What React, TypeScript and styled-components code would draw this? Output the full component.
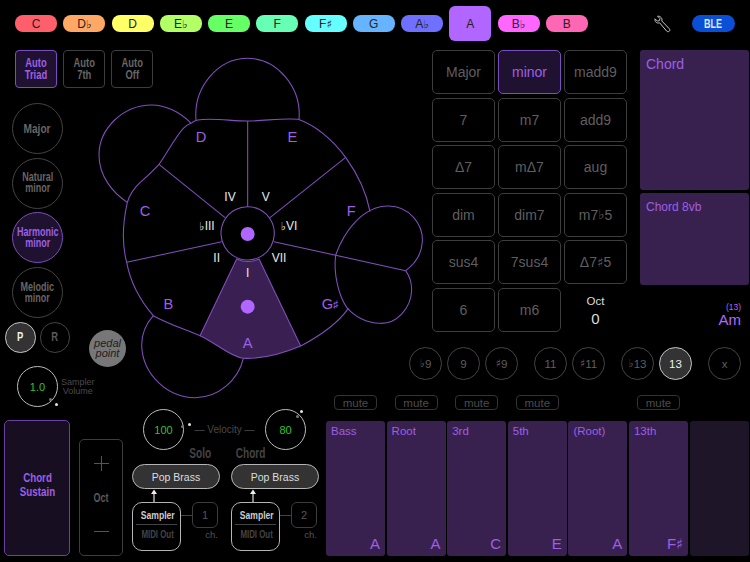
import React from 'react';
import styled, { createGlobalStyle } from 'styled-components';

const GlobalStyle = createGlobalStyle`
  html, body {
    margin: 0;
    background: #000;
    font-family: "Liberation Sans", Arial, "DejaVu Sans", sans-serif;
  }
`;

const PURPLE = '#9d5fe6';
const LINE = '#3d3d3d';

const Page = styled.div`
  width: 750px;
  height: 562px;
  background: #000;
  overflow: hidden;
`;

// the app's bold labels are a condensed face, no such font here
const Squeeze = styled.span<{ $x?: number }>`
  display: inline-block;
  transform: scaleX(${(p) => p.$x ?? 0.75});
  white-space: nowrap;
`;

const TopBar = styled.div`
  height: 47px;
  display: flex;
  align-items: center;
  padding-left: 15px;
`;

const Keys = styled.div`
  display: flex;
  align-items: center;
  gap: 6.25px;
`;

const Key = styled.div<{ $color: string; $active?: boolean }>`
  width: 42px;
  height: ${(p) => (p.$active ? 35 : 17.5)}px;
  border-radius: ${(p) => (p.$active ? 6 : 8)}px;
  background: ${(p) => p.$color};
  color: #222;
  font-size: 12px;
  display: flex;
  align-items: center;
  justify-content: center;
`;

const Acc = styled.span`
  font-size: 0.95em;
  font-family: "DejaVu Sans", sans-serif;
`;

const WrenchIcon = styled.svg`
  width: 17px;
  height: 18px;
  margin-left: 66px;
  color: #c8c8c8;
`;

const Ble = styled.div`
  margin-left: 21px;
  width: 43px;
  height: 17.5px;
  border-radius: 9px;
  background: #0b4fd6;
  color: #dfe8ff;
  font-size: 12px;
  font-weight: bold;
  display: flex;
  align-items: center;
  justify-content: center;
`;

const Body = styled.div`
  display: flex;
`;

const LeftSide = styled.div`
  width: 326px;
  flex-shrink: 0;
`;

const UpperLeft = styled.div`
  height: 362px;
  display: flex;
`;

const Rail = styled.div`
  width: 153px;
  flex-shrink: 0;
  padding-top: 3px;
`;

const AutoRow = styled.div`
  display: flex;
  gap: 6px;
  margin-left: 15px;
`;

const AutoButton = styled.div<{ $active?: boolean }>`
  width: 42px;
  height: 38px;
  box-sizing: border-box;
  border: 1px solid ${(p) => (p.$active ? '#7d4cc0' : LINE)};
  border-radius: 4px;
  background: ${(p) => (p.$active ? '#1f1230' : 'transparent')};
  color: ${(p) => (p.$active ? PURPLE : '#666')};
  font-size: 12.5px;
  font-weight: bold;
  line-height: 12px;
  text-align: center;
  display: flex;
  align-items: center;
  justify-content: center;
`;

const Modes = styled.div`
  margin: 15px 0 0 12px;
  display: flex;
  flex-direction: column;
  gap: 3.7px;
`;

const ModeCircle = styled.div<{ $active?: boolean; $big?: boolean }>`
  width: 51px;
  height: 51px;
  box-sizing: border-box;
  border-radius: 50%;
  border: 1px solid ${(p) => (p.$active ? '#7d4cc0' : '#444')};
  background: ${(p) => (p.$active ? '#1f1230' : 'transparent')};
  color: ${(p) => (p.$active ? PURPLE : '#666')};
  font-size: ${(p) => (p.$big ? 13.5 : 12)}px;
  font-weight: bold;
  line-height: 11px;
  text-align: center;
  display: flex;
  align-items: center;
  justify-content: center;
  white-space: nowrap;
`;

const PedalRow = styled.div`
  height: 44px;
  margin-top: 4px;
  padding-left: 5px;
  display: flex;
  align-items: flex-start;
  gap: 4px;
`;

const SmallToggle = styled.div<{ $on?: boolean }>`
  width: 30.5px;
  height: 30.5px;
  box-sizing: border-box;
  border-radius: 50%;
  border: 1px solid ${(p) => (p.$on ? '#c4c4c4' : '#444')};
  background: ${(p) => (p.$on ? '#333' : 'transparent')};
  color: ${(p) => (p.$on ? '#eee' : '#5c5c5c')};
  font-size: 12.5px;
  font-weight: bold;
  display: flex;
  align-items: center;
  justify-content: center;
`;

const PedalPoint = styled.div`
  width: 37px;
  height: 37px;
  margin: 8px 0 0 15px;
  border-radius: 50%;
  background: #777;
  color: #1d1d1d;
  font-size: 11px;
  font-style: italic;
  line-height: 9.5px;
  text-align: center;
  display: flex;
  align-items: center;
  justify-content: center;
`;

const VolumeRow = styled.div`
  margin-left: 17px;
  display: flex;
  align-items: center;
  gap: 3px;
`;

const Knob = styled.div`
  position: relative;
  width: 41px;
  height: 41px;
  flex-shrink: 0;
  box-sizing: border-box;
  border-radius: 50%;
  border: 1px solid #bdbdbd;
  color: #2fc42f;
  font-size: 11px;
  display: flex;
  align-items: center;
  justify-content: center;
`;

const KnobDot = styled.i<{ $x: number; $y: number; $dim?: boolean }>`
  position: absolute;
  left: ${(p) => p.$x}px;
  top: ${(p) => p.$y}px;
  width: 3px;
  height: 3px;
  border-radius: 50%;
  background: ${(p) => (p.$dim ? '#777' : '#e4e4e4')};
`;

const VolumeLabel = styled.div`
  color: #4a4a4a;
  font-size: 9px;
  line-height: 8.5px;
  text-align: center;
`;

const WheelArea = styled.div`
  margin: 3px 0 0 -58px;
  width: 231px;
`;

const WheelSvg = styled.svg`
  display: block;
  width: 330px;
  height: 350px;
  overflow: visible;
`;

const Outline = styled.path`
  fill: none;
  stroke: #7f4fbc;
  stroke-width: 3.2;
`;

const Wedge = styled.path`
  fill: #3a2052;
  stroke: #7f4fbc;
  stroke-width: 3.2;
`;

const NoteText = styled.text`
  fill: ${PURPLE};
  font-size: 44px;
  text-anchor: middle;
  dominant-baseline: central;
`;

const DegreeText = styled.text`
  fill: #e8e8e8;
  font-size: 36px;
  text-anchor: middle;
  dominant-baseline: central;
`;

const Dot = styled.circle`
  fill: #b066ff;
`;

const LowerLeft = styled.div`
  height: 153px;
  display: flex;
`;

const Sustain = styled.div`
  width: 66px;
  height: 136px;
  margin: 11px 0 0 4px;
  padding-bottom: 6px;
  box-sizing: border-box;
  border: 1px solid #6b3fa3;
  border-radius: 5px;
  background: #170e22;
  color: ${PURPLE};
  font-size: 13px;
  font-weight: bold;
  line-height: 14px;
  text-align: center;
  display: flex;
  align-items: center;
  justify-content: center;
`;

const OctBox = styled.div`
  width: 44px;
  height: 117px;
  margin: 30px 0 0 9px;
  box-sizing: border-box;
  border: 1px solid ${LINE};
  border-radius: 5px;
  color: #5a5a5a;
  display: flex;
  flex-direction: column;
  align-items: center;
  justify-content: space-between;
  padding: 16px 0;
`;

const OctSign = styled.svg`
  display: block;
  width: 15px;
  height: 15px;
  stroke: #555;
  stroke-width: 1;
`;

const OctLabel = styled.div`
  font-size: 12px;
  font-weight: bold;
`;

const SoundArea = styled.div`
  width: 188px;
  margin-left: 9px;
`;

const VelocityRow = styled.div`
  display: flex;
  align-items: center;
  padding-left: 11px;
`;

const VelocityLabel = styled.div`
  width: 81px;
  text-align: center;
  color: #4a4a4a;
  font-size: 10px;
  white-space: nowrap;
`;

const ChannelHeads = styled.div`
  height: 14px;
  box-sizing: border-box;
  padding-bottom: 8px;
  display: flex;
  align-items: center;
  color: #444;
  font-size: 14px;
  font-weight: bold;
`;

const SoloHead = styled.span`
  margin-left: 53px;
`;

const ChordHead = styled.span`
  margin-left: 15px;
`;

const Channels = styled.div`
  display: flex;
  gap: 11px;
`;

const Channel = styled.div`
  width: 88px;
`;

const Preset = styled.div`
  height: 25px;
  box-sizing: border-box;
  border: 1px solid #b5b5b5;
  border-radius: 12.5px;
  background: #333;
  color: #ddd;
  font-size: 10.5px;
  display: flex;
  align-items: center;
  justify-content: center;
`;

const Arrow = styled.svg`
  display: block;
  width: 8px;
  height: 13px;
  margin-left: 18px;
`;

const OutRow = styled.div`
  display: flex;
  align-items: flex-start;
`;

const OutBox = styled.div`
  width: 49px;
  height: 49px;
  box-sizing: border-box;
  border: 1px solid #b5b5b5;
  border-radius: 10px;
  padding: 6px 3px 0;
  text-align: center;
  flex-shrink: 0;
`;

const OutName = styled.div`
  color: #ccc;
  font-size: 11px;
  line-height: 13px;
  font-weight: bold;
  padding-bottom: 2px;
  border-bottom: 1px solid #444;
`;

const OutAlt = styled.div`
  color: #444;
  font-size: 10.5px;
  line-height: 12px;
  font-weight: bold;
  margin-top: 3px;
  white-space: nowrap;
`;

const Link = styled.div`
  width: 11px;
  height: 1px;
  margin-top: 13px;
  background: #444;
`;

const ChannelCol = styled.div`
  width: 26px;
`;

const ChannelBox = styled.div`
  height: 26px;
  box-sizing: border-box;
  border: 1px solid ${LINE};
  border-radius: 6px;
  color: #555;
  font-size: 11px;
  display: flex;
  align-items: center;
  justify-content: center;
`;

const ChannelCaption = styled.div`
  color: #555;
  font-size: 9.5px;
  text-align: right;
  margin-top: 1px;
`;

const RightSide = styled.div`
  width: 424px;
  flex-shrink: 0;
`;

const ChordRow = styled.div`
  padding: 3px 0 0 106px;
  display: flex;
  height: 282px;
`;

const ChordGrid = styled.div`
  display: grid;
  grid-template-columns: repeat(3, 63px);
  grid-auto-rows: 44px;
  column-gap: 3px;
  row-gap: 3.5px;
`;

const ChordCell = styled.div<{ $active?: boolean }>`
  box-sizing: border-box;
  border: 1px solid ${(p) => (p.$active ? '#7d4cc0' : LINE)};
  border-radius: 5px;
  background: ${(p) => (p.$active ? '#1f1230' : 'transparent')};
  color: ${(p) => (p.$active ? PURPLE : '#5f5f5f')};
  font-size: 14px;
  display: flex;
  align-items: center;
  justify-content: center;
`;

const OctDisplay = styled.div`
  color: #ddd;
  font-size: 11.5px;
  text-align: center;
  line-height: 17px;
  align-self: center;
`;

const OctValue = styled.div`
  font-size: 15px;
`;

const ChordPads = styled.div`
  width: 109px;
  margin-left: 13px;
  display: flex;
  flex-direction: column;
  gap: 2.5px;
`;

const ChordPad = styled.div<{ $h: number; $small?: boolean }>`
  height: ${(p) => p.$h}px;
  box-sizing: border-box;
  padding: ${(p) => (p.$small ? '7px 6px' : '6px 6px')};
  border-radius: 3px;
  background: #38214f;
  color: ${PURPLE};
  font-size: ${(p) => (p.$small ? 12 : 14)}px;
`;

const ChordName = styled.div`
  margin-top: 16px;
  padding-right: 8px;
  text-align: right;
  color: #b066ff;
  font-size: 15px;
  line-height: 16px;
`;

const ChordExt = styled.div`
  font-size: 8.5px;
  line-height: 9px;
`;

const ExtRow = styled.div`
  margin-top: 15px;
  padding-left: 83px;
  display: flex;
  gap: 16px;
`;

const ExtGroup = styled.div`
  display: flex;
  gap: 5px;
`;

const ExtCircle = styled.div<{ $on?: boolean }>`
  width: 33px;
  height: 33px;
  box-sizing: border-box;
  border-radius: 50%;
  border: 1px solid ${(p) => (p.$on ? '#c4c4c4' : '#444')};
  background: ${(p) => (p.$on ? '#333' : 'transparent')};
  color: ${(p) => (p.$on ? '#eee' : '#5f5f5f')};
  font-size: 11.5px;
  display: flex;
  align-items: center;
  justify-content: center;
`;

const PadGrid = styled.div`
  display: grid;
  grid-template-columns: repeat(7, 59px);
  column-gap: 1.6px;
`;

const MuteRow = styled(PadGrid)`
  margin-top: 15px;
  height: 15px;
`;

const Mute = styled.div`
  width: 43px;
  height: 15px;
  margin: 0 auto;
  box-sizing: border-box;
  border: 1px solid #333;
  border-radius: 4px;
  color: #4c4c4c;
  font-size: 11.5px;
  display: flex;
  align-items: center;
  justify-content: center;
`;

const Voices = styled(PadGrid)`
  margin-top: 11px;
  height: 135px;
`;

const Voice = styled.div<{ $empty?: boolean }>`
  border-radius: 3px;
  background: ${(p) => (p.$empty ? '#1f1529' : '#38214f')};
  color: ${PURPLE};
  padding: 4px 5px;
  box-sizing: border-box;
  display: flex;
  flex-direction: column;
  justify-content: space-between;
`;

const VoiceRole = styled.div`
  font-size: 11.5px;
`;

const VoiceNote = styled.div`
  font-size: 15px;
  text-align: right;
`;

const flat = <Acc>♭</Acc>;
const sharp = <Acc>♯</Acc>;

const keys: { label: React.ReactNode; color: string; active?: boolean }[] = [
  { label: 'C', color: '#ff5f6b' },
  { label: <>D{flat}</>, color: '#ffa866' },
  { label: 'D', color: '#ffff66' },
  { label: <>E{flat}</>, color: '#b3ff66' },
  { label: 'E', color: '#66ff66' },
  { label: 'F', color: '#66ffb3' },
  { label: <>F{sharp}</>, color: '#66ffff' },
  { label: 'G', color: '#66b3ff' },
  { label: <>A{flat}</>, color: '#7070ff' },
  { label: 'A', color: '#b066ff', active: true },
  { label: <>B{flat}</>, color: '#ff66ff' },
  { label: 'B', color: '#ff66b3' },
];

const chords: { label: React.ReactNode; active?: boolean }[] = [
  { label: 'Major' },
  { label: 'minor', active: true },
  { label: 'madd9' },
  { label: '7' },
  { label: 'm7' },
  { label: 'add9' },
  { label: 'Δ7' },
  { label: 'mΔ7' },
  { label: 'aug' },
  { label: 'dim' },
  { label: 'dim7' },
  { label: <>m7{flat}5</> },
  { label: 'sus4' },
  { label: '7sus4' },
  { label: <>Δ7{sharp}5</> },
  { label: '6' },
  { label: 'm6' },
];

const voices: { role?: string; note?: React.ReactNode; mute?: boolean }[] = [
  { role: 'Bass', note: 'A', mute: true },
  { role: 'Root', note: 'A', mute: true },
  { role: '3rd', note: 'C', mute: true },
  { role: '5th', note: 'E', mute: true },
  { role: '(Root)', note: 'A' },
  { role: '13th', note: <>F{sharp}</>, mute: true },
  {},
];

const extGroups: { label: React.ReactNode; on?: boolean }[][] = [
  [{ label: <>{flat}9</> }, { label: '9' }, { label: <>{sharp}9</> }],
  [{ label: '11' }, { label: <>{sharp}11</> }],
  [{ label: <>{flat}13</> }, { label: '13', on: true }],
  [{ label: 'x' }],
];

function Wheel() {
  return (
    <WheelSvg viewBox="0 0 990 1050">
      <Wedge d="M425 627 L315 857 C365 880 405 920 445 925 C500 927 560 912 617 888 L492 627 A80 80 0 0 1 425 627 Z" />
      {/* lobes */}
      <Outline d="M303 210 C295 110 370 25 458 25 C545 25 620 110 612 208" />
      <Outline d="M288 220 C255 185 210 165 170 165 C85 165 12 235 12 315 C12 380 55 430 97 457" />
      <Outline d="M722 615 C745 550 800 468 880 468 C945 468 985 525 982 575 C980 615 955 645 932 662" />
      <Outline d="M932 662 C945 680 950 700 950 720 C948 775 905 822 855 820 C810 818 775 795 755 772 C730 735 715 670 722 615" />
      <Outline d="M175 797 C150 825 140 860 140 885 C142 975 220 1043 300 1043 C370 1043 430 990 445 925" />
      {/* rim */}
      <Outline d="M288 220 C295 214 300 212 308 210 C350 203 410 213 458 213 C510 213 565 203 610 208 C670 230 720 280 752 322 C790 375 815 430 825 485" />
      <Outline d="M760 775 C725 825 670 860 617 888" />
      <Outline d="M315 857 C270 838 215 820 175 797 C130 745 105 690 95 637 C80 580 85 510 97 457 C105 430 120 412 135 398 C155 380 175 362 192 343 C215 312 240 262 265 235 C275 225 282 222 288 220" />
      {/* spokes */}
      <Outline d="M458 213 L458 470" />
      <Outline d="M192 343 L390 503" />
      <Outline d="M752 322 L525 503" />
      <Outline d="M95 637 L380 575" />
      <Outline d="M537 575 L932 662" />
      <Outline d="M458 470 A80 80 0 1 1 457.9 470 Z" />
      <Dot cx="458" cy="552" r="21" />
      <Dot cx="458" cy="770" r="21" />
      <NoteText x="318" y="260">D</NoteText>
      <NoteText x="592" y="260">E</NoteText>
      <NoteText x="150" y="483">C</NoteText>
      <NoteText x="769" y="483">F</NoteText>
      <NoteText x="220" y="763">B</NoteText>
      <NoteText x="705" y="763">G<tspan fontSize="32">♯</tspan></NoteText>
      <NoteText x="458" y="880">A</NoteText>
      <DegreeText x="405" y="440">IV</DegreeText>
      <DegreeText x="512" y="440">V</DegreeText>
      <DegreeText x="336" y="528"><tspan fontSize="34">♭</tspan>III</DegreeText>
      <DegreeText x="582" y="528"><tspan fontSize="34">♭</tspan>VI</DegreeText>
      <DegreeText x="365" y="625">II</DegreeText>
      <DegreeText x="552" y="625">VII</DegreeText>
      <DegreeText x="458" y="668">I</DegreeText>
    </WheelSvg>
  );
}

function SoundChannel({ name, channel }: { name: string; channel: number }) {
  return (
    <Channel>
      <Preset>{name}</Preset>
      <Arrow viewBox="0 0 8 13">
        <path d="M4 13 L4 4" stroke="#ddd" strokeWidth="1.2" />
        <path d="M1 5 L4 0.5 L7 5 Z" fill="#eee" />
      </Arrow>
      <OutRow>
        <OutBox>
          <OutName><Squeeze $x={0.78}>Sampler</Squeeze></OutName>
          <OutAlt><Squeeze>MIDI Out</Squeeze></OutAlt>
        </OutBox>
        <Link />
        <ChannelCol>
          <ChannelBox>{channel}</ChannelBox>
          <ChannelCaption>ch.</ChannelCaption>
        </ChannelCol>
      </OutRow>
    </Channel>
  );
}

export default function App() {
  return (
    <Page>
      <GlobalStyle />
      <TopBar>
        <Keys>
          {keys.map((k, i) => (
            <Key key={i} $color={k.color} $active={k.active}>
              {k.label}
            </Key>
          ))}
        </Keys>
        <WrenchIcon viewBox="0 0 17 18" fill="none" stroke="currentColor" strokeWidth="1">
          <path d="M3.6 1.2 L6 3.6 L5.4 5.6 L3.4 6.2 L1 3.8 C0.7 6 1.6 7.6 3.6 8 C4.4 8.1 5 8 5.6 7.8 L12.6 16 C13.4 16.9 14.6 16.9 15.3 16.2 C16 15.5 16 14.4 15.2 13.6 L7.8 6 C8.1 4.8 8 3.6 7.2 2.6 C6.4 1.6 5 1 3.6 1.2 Z" />
        </WrenchIcon>
        <Ble><Squeeze>BLE</Squeeze></Ble>
      </TopBar>
      <Body>
        <LeftSide>
          <UpperLeft>
            <Rail>
              <AutoRow>
                <AutoButton $active><Squeeze>Auto<br />Triad</Squeeze></AutoButton>
                <AutoButton><Squeeze>Auto<br />7th</Squeeze></AutoButton>
                <AutoButton><Squeeze>Auto<br />Off</Squeeze></AutoButton>
              </AutoRow>
              <Modes>
                <ModeCircle $big><Squeeze>Major</Squeeze></ModeCircle>
                <ModeCircle><Squeeze>Natural<br />minor</Squeeze></ModeCircle>
                <ModeCircle $active><Squeeze>Harmonic<br />minor</Squeeze></ModeCircle>
                <ModeCircle><Squeeze>Melodic<br />minor</Squeeze></ModeCircle>
              </Modes>
              <PedalRow>
                <SmallToggle $on><Squeeze>P</Squeeze></SmallToggle>
                <SmallToggle><Squeeze>R</Squeeze></SmallToggle>
                <PedalPoint>pedal<br />point</PedalPoint>
              </PedalRow>
              <VolumeRow>
                <Knob>
                  1.0
                  <KnobDot $x={31} $y={31} $dim />
                  <KnobDot $x={37} $y={36} />
                </Knob>
                <VolumeLabel>Sampler<br />Volume</VolumeLabel>
              </VolumeRow>
            </Rail>
            <WheelArea>
              <Wheel />
            </WheelArea>
          </UpperLeft>
          <LowerLeft>
            <Sustain><Squeeze>Chord<br />Sustain</Squeeze></Sustain>
            <OctBox>
              <OctSign viewBox="0 0 15 15"><path d="M0 7.5 H15 M7.5 0 V15" /></OctSign>
              <OctLabel><Squeeze>Oct</Squeeze></OctLabel>
              <OctSign viewBox="0 0 15 15"><path d="M0 7.5 H15" /></OctSign>
            </OctBox>
            <SoundArea>
              <VelocityRow>
                <Knob>
                  100
                  <KnobDot $x={37} $y={15} $dim />
                  <KnobDot $x={44} $y={13} />
                </Knob>
                <VelocityLabel>— Velocity —</VelocityLabel>
                <Knob>
                  80
                  <KnobDot $x={30} $y={5} $dim />
                  <KnobDot $x={34} $y={0} />
                </Knob>
              </VelocityRow>
              <ChannelHeads>
                <SoloHead><Squeeze $x={0.72}>Solo</Squeeze></SoloHead>
                <ChordHead><Squeeze $x={0.72}>Chord</Squeeze></ChordHead>
              </ChannelHeads>
              <Channels>
                <SoundChannel name="Pop Brass" channel={1} />
                <SoundChannel name="Pop Brass" channel={2} />
              </Channels>
            </SoundArea>
          </LowerLeft>
        </LeftSide>
        <RightSide>
          <ChordRow>
            <ChordGrid>
              {chords.map((c, i) => (
                <ChordCell key={i} $active={c.active}>
                  {c.label}
                </ChordCell>
              ))}
              <OctDisplay>
                Oct
                <OctValue>0</OctValue>
              </OctDisplay>
            </ChordGrid>
            <ChordPads>
              <ChordPad $h={140}>Chord</ChordPad>
              <ChordPad $h={92} $small>Chord 8vb</ChordPad>
              <ChordName>
                <ChordExt>(13)</ChordExt>
                Am
              </ChordName>
            </ChordPads>
          </ChordRow>
          <ExtRow>
            {extGroups.map((group, i) => (
              <ExtGroup key={i}>
                {group.map((e, j) => (
                  <ExtCircle key={j} $on={e.on}>
                    {e.label}
                  </ExtCircle>
                ))}
              </ExtGroup>
            ))}
          </ExtRow>
          <MuteRow>
            {voices.map((v, i) => (
              <div key={i}>{v.mute && <Mute>mute</Mute>}</div>
            ))}
          </MuteRow>
          <Voices>
            {voices.map((v, i) => (
              <Voice key={i} $empty={!v.role}>
                <VoiceRole>{v.role}</VoiceRole>
                <VoiceNote>{v.note}</VoiceNote>
              </Voice>
            ))}
          </Voices>
        </RightSide>
      </Body>
    </Page>
  );
}
